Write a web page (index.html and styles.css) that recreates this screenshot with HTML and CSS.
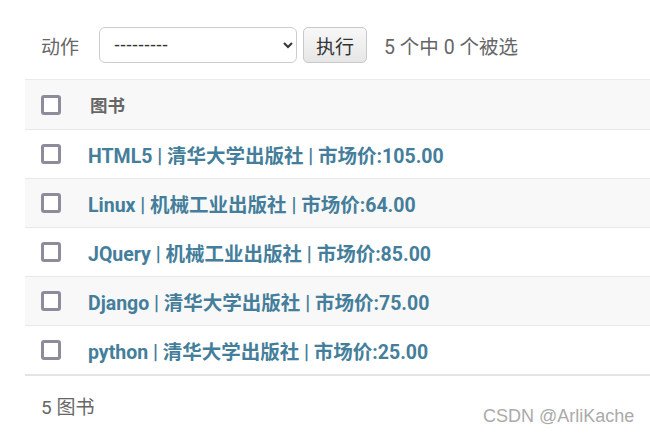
FILE: index.html
```html
<!DOCTYPE html>
<html lang="zh-CN">
<head>
    <meta charset="UTF-8">
    <title>选择 图书 来修改</title>
    <link rel="stylesheet" href="styles.css">
</head>
<body>
    <div class="changelist">
        <div class="actions">
            <label class="action-label">动作</label>
            <select class="action-select">
                <option>---------</option>
            </select>
            <button class="action-btn">执行</button>
            <span class="action-counter">5 个中 0 个被选</span>
        </div>

        <table class="result-list">
            <thead>
                <tr>
                    <th class="check-col"><span class="checkbox"></span></th>
                    <th>图书</th>
                </tr>
            </thead>
            <tbody>
                <tr>
                    <td class="check-col"><span class="checkbox"></span></td>
                    <td><a href="#">HTML5 | 清华大学出版社 | 市场价:105.00</a></td>
                </tr>
                <tr class="alt">
                    <td class="check-col"><span class="checkbox"></span></td>
                    <td><a href="#">Linux | 机械工业出版社 | 市场价:64.00</a></td>
                </tr>
                <tr>
                    <td class="check-col"><span class="checkbox"></span></td>
                    <td><a href="#">JQuery | 机械工业出版社 | 市场价:85.00</a></td>
                </tr>
                <tr class="alt">
                    <td class="check-col"><span class="checkbox"></span></td>
                    <td><a href="#">Django | 清华大学出版社 | 市场价:75.00</a></td>
                </tr>
                <tr>
                    <td class="check-col"><span class="checkbox"></span></td>
                    <td><a href="#">python | 清华大学出版社 | 市场价:25.00</a></td>
                </tr>
            </tbody>
        </table>

        <p class="paginator">5 图书</p>
    </div>
    <div class="watermark">CSDN @ArliKache</div>
</body>
</html>
```

FILE: styles.css
```css
body {
    margin: 0;
    padding: 0 0 0 25px;
    font-family: Roboto, "Noto Sans CJK SC", sans-serif;
    color: #333;
    background: #fff;
    overflow: hidden;
}
.changelist {
    width: 640px;
}
.actions {
    display: flex;
    align-items: center;
    height: 80px;
    padding-left: 16px;
    border-bottom: 1px solid #eaeaea;
    box-sizing: border-box;
    padding-top: 11px;
}
.action-label {
    font-size: 19px;
    color: #666;
    margin-right: 20px;
}
.action-select {
    width: 198px;
    height: 36px;
    border: 1px solid #ccc;
    border-radius: 6px;
    background: #fff;
    padding: 0 10px;
    font-family: "Liberation Sans", sans-serif;
    font-size: 18px;
    color: #333;
}
.action-btn {
    margin-left: 6px;
    width: 64px;
    height: 36px;
    border: 1px solid #c8c8c8;
    border-radius: 5px;
    background: linear-gradient(#f8f8f8, #e6e6e6);
    font-family: Roboto, "Noto Sans CJK SC", sans-serif;
    font-size: 19px;
    color: #333;
    padding: 0;
}
.action-counter {
    margin-left: 17px;
    font-size: 19.5px;
    color: #666;
}
.result-list {
    width: 100%;
    border-collapse: collapse;
}
.result-list th,
.result-list td {
    height: 48px;
    padding: 0;
    text-align: left;
    border-bottom: 1px solid #e8e8e8;
    vertical-align: middle;
}
.result-list thead tr {
    background: #f8f8f8;
}
.result-list th {
    height: 49px;
    font-size: 17.5px;
    font-weight: bold;
    color: #666;
    padding-left: 2px;
}
.result-list tbody tr:last-child td {
    border-bottom: 2px solid #e4e4e4;
}
.result-list tr.alt {
    background: #f8f8f8;
}
.result-list .check-col {
    width: 47px;
    padding-left: 16px;
}
.checkbox {
    display: block;
    width: 14px;
    height: 14px;
    border: 3px solid #8e8b9b;
    border-radius: 3px;
    background: #fff;
}
.result-list a {
    font-size: 19.5px;
    font-weight: bold;
    color: #447e9b;
    text-decoration: none;
}
.paginator {
    margin: 0;
    padding: 16px 0 0 16px;
    font-size: 19px;
    color: #666;
}
.watermark {
    position: absolute;
    left: 483px;
    top: 406px;
    font-family: "Liberation Sans", sans-serif;
    font-size: 18px;
    color: #aaa;
}
```
